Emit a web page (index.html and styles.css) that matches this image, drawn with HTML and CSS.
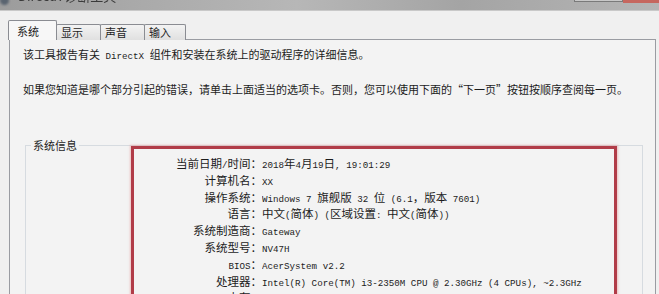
FILE: index.html
```html
<!DOCTYPE html>
<html lang="zh-CN">
<head>
<meta charset="utf-8">
<title>DirectX 诊断工具</title>
<link rel="stylesheet" href="styles.css">
</head>
<body>
<div class="titlebar">
  <div class="appicon"></div>
  <div class="title">DirectX 诊断工具</div>
  <div class="spacer"></div>
  <div class="winbtns"></div>
  <div class="closebtn"></div>
</div>
<div class="window">
  <div class="tabs">
    <div class="tab active">系统</div>
    <div class="tab t2">显示</div>
    <div class="tab t3">声音</div>
    <div class="tab t4">输入</div>
  </div>
  <div class="panel">
    <p class="intro">该工具报告有关<span class="m"> DirectX </span>组件和安装在系统上的驱动程序的详细信息。</p>
    <p class="intro second">如果您知道是哪个部分引起的错误，请单击上面适当的选项卡。否则，您可以使用下面的“下一页”按钮按顺序查阅每一页。</p>
    <div class="group">
      <span class="legend">系统信息</span>
      <div class="redbox">
        <div class="rows">
          <div class="lbl">当前日期<span class="m">/</span>时间：</div>
          <div class="val"><span class="m">2018</span>年<span class="m">4</span>月<span class="m">19</span>日<span class="m">, 19:01:29</span></div>
          <div class="lbl">计算机名：</div>
          <div class="val"><span class="m">XX</span></div>
          <div class="lbl">操作系统：</div>
          <div class="val"><span class="m">Windows 7 </span>旗舰版<span class="m"> 32 </span>位<span class="m"> (6.1</span>，版本<span class="m"> 7601)</span></div>
          <div class="lbl">语言：</div>
          <div class="val">中文<span class="m">(</span>简体<span class="m">) (</span>区域设置<span class="m">: </span>中文<span class="m">(</span>简体<span class="m">))</span></div>
          <div class="lbl">系统制造商：</div>
          <div class="val"><span class="m">Gateway</span></div>
          <div class="lbl">系统型号：</div>
          <div class="val"><span class="m">NV47H</span></div>
          <div class="lbl"><span class="m">BIOS</span>：</div>
          <div class="val"><span class="m">AcerSystem v2.2</span></div>
          <div class="lbl">处理器：</div>
          <div class="val"><span class="m">Intel(R) Core(TM) i3-2350M CPU @ 2.30GHz (4 CPUs), ~2.3GHz</span></div>
          <div class="lbl">内存：</div>
          <div class="val"><span class="m">2048MB RAM</span></div>
        </div>
      </div>
    </div>
  </div>
</div>
</body>
</html>
```

FILE: styles.css
```css
html, body {
  margin: 0;
  padding: 0;
}
body {
  width: 659px;
  height: 294px;
  overflow: hidden;
  background: #f0f0f0;
  font-family: "Noto Sans CJK SC", "Liberation Sans", sans-serif;
  color: #1c1c1c;
}
.m {
  font-family: "Liberation Mono", "DejaVu Sans Mono", monospace;
  font-size: 9.2px;
}
.titlebar {
  height: 10px;
  display: flex;
  align-items: flex-start;
  overflow: hidden;
  background: linear-gradient(90deg, #9c9c9c 0%, #a9a9a9 20%, #b7b7b7 45%, #a4a4a4 70%, #b5b5b5 100%);
  border-bottom: 1px solid #c9c9c9;
}
.appicon {
  width: 9px;
  height: 9px;
  margin-top: -4px;
  border-radius: 50%;
  background: #5a6470;
  filter: blur(0.8px);
  flex: none;
}
.title {
  margin-top: -11px;
  margin-left: 9px;
  font-size: 13px;
  line-height: 14px;
  color: #3a3a3a;
  filter: blur(0.7px);
  white-space: nowrap;
}
.spacer { flex: 1; }
.winbtns {
  width: 47px;
  height: 1px;
  border: 1px solid #7a7a7a;
  border-top: none;
  background: #c8c8c8;
  flex: none;
}
.closebtn {
  width: 36px;
  height: 3px;
  background: #c6675f;
  flex: none;
}
.window {
  padding-top: 10px;
}
.tabs {
  display: flex;
  align-items: flex-end;
  margin-left: 8px;
  height: 19px;
  position: relative;
  z-index: 1;
  margin-bottom: -1px;
}
.tab {
  box-sizing: border-box;
  height: 16px;
  border: 1px solid #8a8c92;
  border-bottom: none;
  background: linear-gradient(#f3f3f3, #e0e0e0);
  font-size: 11px;
  line-height: 15px;
  padding-left: 4px;
  margin-left: -1px;
  border-radius: 2px 2px 0 0;
}
.tab.active {
  height: 20px;
  width: 49px;
  padding-left: 8px;
  line-height: 20px;
  background: #f7f7f7;
  margin-left: 0;
  position: relative;
  z-index: 2;
}
.t2 { width: 45px; }
.t3 { width: 45px; }
.t4 { width: 42px; }
.panel {
  box-sizing: border-box;
  margin-left: 9px;
  width: 647px;
  height: 260px;
  border: 1px solid #9a9ca2;
  border-bottom: none;
  background: #f3f3f3;
  padding-top: 6px;
}
.intro {
  margin: 0 0 0 13px;
  font-size: 11px;
  line-height: 16px;
  white-space: nowrap;
}
.intro.second {
  margin-top: 16px;
}
.group {
  position: relative;
  margin: 48px 12px 0 15px;
  border: 1px solid #d6dbe0;
  height: 200px;
}
.legend {
  position: absolute;
  left: 5px;
  top: -9px;
  padding: 0 2px;
  background: #f3f3f3;
  font-size: 11px;
  line-height: 16px;
}
.redbox {
  margin-left: 105px;
  width: 486px;
  height: 220px;
  box-sizing: border-box;
  border: 3px solid #b13c48;
  box-shadow: 0 0 2px 1px rgba(230, 150, 150, 0.55);
  padding-top: 6px;
}
.rows {
  display: grid;
  grid-template-columns: 128px 1fr;
  grid-auto-rows: 16.8px;
  font-size: 11.5px;
  line-height: 16.8px;
  white-space: nowrap;
}
.lbl, .val {
  height: 16.8px;
  overflow: hidden;
}
.lbl {
  text-align: right;
}
```
